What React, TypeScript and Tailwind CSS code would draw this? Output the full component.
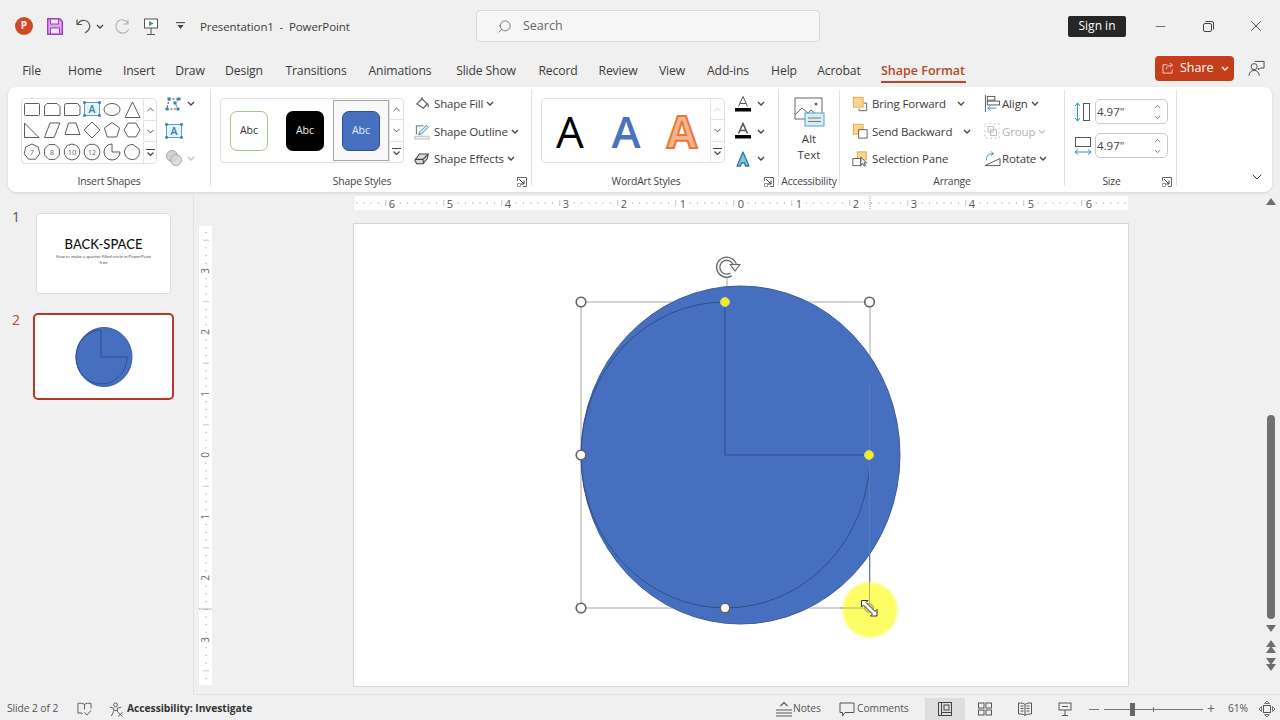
import React from "react";
import { ChevronDown, ChevronUp, Search, X, Minus } from "lucide-react";

const poly = (cx: number, cy: number, r: number, n: number, rot = -90) =>
  Array.from({ length: n }, (_, i) => {
    const a = ((rot + (360 / n) * i) * Math.PI) / 180;
    return `${(cx + r * Math.cos(a)).toFixed(1)},${(cy + r * Math.sin(a)).toFixed(1)}`;
  }).join(" ");

const Chev = ({ gray = false }: { gray?: boolean }) => (
  <svg viewBox="0 0 8 5" className="w-[8px] h-[5px] shrink-0">
    <path d="M1 1l3 3 3-3" fill="none" stroke={gray ? "#c4c4c4" : "#444"} strokeWidth="1.3" />
  </svg>
);

const Launcher = () => (
  <svg viewBox="0 0 10 10" className="w-[10px] h-[10px]">
    <path d="M.5 4V.5H9.5V9.5H6" fill="none" stroke="#666" />
    <path d="M2 2l5 5M7 3.5V7H3.5" fill="none" stroke="#3d3d3d" />
    <path d="M.5 6.5h3v3h-3z" fill="none" stroke="#999" />
  </svg>
);

const GalleryScroll = ({ disabledUp = false }: { disabledUp?: boolean }) => (
  <div className="flex flex-col h-full border-l border-[#e4e4e4] text-[#444] w-full">
    <div className="flex-1 flex items-center justify-center border-b border-[#e4e4e4]">
      <ChevronUp size={11} strokeWidth={2} color={disabledUp ? "#c8c8c8" : "#444"} />
    </div>
    <div className="flex-1 flex items-center justify-center border-b border-[#e4e4e4]">
      <ChevronDown size={11} strokeWidth={2} />
    </div>
    <div className="flex-1 flex items-center justify-center">
      <svg viewBox="0 0 9 8" className="w-[9px] h-[8px]">
        <path d="M0 .5h9" stroke="#444" />
        <path d="M1.5 3.5l3 3 3-3" fill="none" stroke="#444" strokeWidth="1.2" />
      </svg>
    </div>
  </div>
);

const Group = ({
  w,
  label,
  launcher,
  children,
  border = true,
}: {
  w: string;
  label: string;
  launcher?: boolean;
  children: React.ReactNode;
  border?: boolean;
}) => (
  <div className={`${w} h-[96px] mt-[3px] flex flex-col shrink-0 ${border ? "border-r border-[#e2e2e2]" : ""}`}>
    <div className="flex-1 flex min-h-0">{children}</div>
    <div className="h-[16px] -mb-[4px] flex items-center text-[10.4px] tracking-[-0.2px] text-[#444]">
      <div className="flex-1 text-center whitespace-nowrap">{label}</div>
      {launcher && (
        <div className="w-[18px] flex justify-center">
          <Launcher />
        </div>
      )}
    </div>
  </div>
);

const TextBoxGlyph = ({ className }: { className: string }) => (
  <svg viewBox="0 0 18 16" className={className}>
    <rect x="1.5" y="1.5" width="15" height="13" fill="#e8f3f8" stroke="#5aa0bf" />
    <text x="9" y="12" textAnchor="middle" fontSize="10.5" fontWeight="600" fill="#3c7fa8" fontFamily="Open Sans, sans-serif">
      A
    </text>
    {[[1.5, 1.5], [16.5, 1.5], [1.5, 14.5], [16.5, 14.5]].map(([x, y], i) => (
      <rect key={i} x={x - 1.3} y={y - 1.3} width="2.6" height="2.6" fill="#2f87ad" />
    ))}
  </svg>
);

const ShapesGallery = () => {
  const s = { fill: "none", stroke: "#5c5c5c", strokeWidth: 1 };
  const t = { fontSize: 7.5, fill: "#666", textAnchor: "middle" as const, fontFamily: "Open Sans, sans-serif" };
  return (
    <svg viewBox="21 98 122 66" className="w-[122px] h-[66px] shrink-0">
      <rect x="24.5" y="103.5" width="15" height="12" rx="1" {...s} />
      <path d="M47 103.5h10l3 3v9H44.5v-9.5z" {...s} strokeLinejoin="round" />
      <path d="M64.5 105.5a2 2 0 0 1 2-2h11l2.500 2.500v7.500a2 2 0 0 1-2 2h-13.500z" {...s} />
      <g transform="translate(83 101)">
        <rect x="1.500" y="1.500" width="15" height="13" fill="#e8f3f8" stroke="#5aa0bf" />
        <text x="9" y="12" textAnchor="middle" fontSize="10.500" fontWeight="600" fill="#3c7fa8" fontFamily="Open Sans, sans-serif">A</text>
        {[[1.5, 1.5], [16.5, 1.5], [1.5, 14.5], [16.5, 14.5]].map(([x, y], i) => (
          <rect key={i} x={x - 1.3} y={y - 1.3} width="2.6" height="2.6" fill="#2f87ad" />
        ))}
      </g>
      <ellipse cx="112" cy="109.500" rx="8" ry="6" {...s} />
      <path d="M132.500 102L140 117.500H125z" {...s} />
      <path d="M24.500 123L39 137.500H24.500z" {...s} />
      <path d="M44.500 137.500L50 123H60L54 137.500z" {...s} />
      <path d="M65 134.500L68.500 123H76L80 134.500z" {...s} />
      <path d="M92 122L100 130L92 138L84 130z" {...s} />
      <polygon points={poly(112, 130.5, 8, 5)} {...s} />
      <polygon points={poly(132, 130, 8, 6, 0)} {...s} />
      <polygon points={poly(32, 152, 8, 7)} {...s} />
      <text x="32" y="155" {...t}>7</text>
      <polygon points={poly(52, 152, 8, 8, 22.5)} {...s} />
      <text x="52" y="155" {...t}>8</text>
      <polygon points={poly(72, 152, 8, 10, 18)} {...s} />
      <text x="72" y="155" {...t}>10</text>
      <polygon points={poly(92, 152, 8, 12, 15)} {...s} />
      <text x="92" y="155" fontSize="7" fill="#666" textAnchor="middle" fontFamily="Open Sans, sans-serif">12</text>
      <path d="M112 144a8 8 0 1 0 8 8h-8z" {...s} />
      <path d="M124.500 152a7.500 7.500 0 0 1 7.500-7.500h1l6 4.500c1.500 7-2 10.500-7 10.500a7.500 7.500 0 0 1-7.500-7.500z" {...s} />
    </svg>
  );
};

const ActionRow = ({
  icon,
  label,
  textW,
  gray,
  tight,
}: {
  icon: React.ReactNode;
  label: string;
  textW?: string;
  gray?: boolean;
  tight?: boolean;
}) => (
  <div className={`h-[27.500px] flex items-center text-[11.5px] tracking-[-0.15px] whitespace-nowrap ${gray ? "text-[#b5b5b5]" : "text-[#3b3b3b]"}`}>
    <div className="w-[18px] h-[18px] flex items-center justify-center shrink-0">{icon}</div>
    <div className={`${tight ? "ml-[1px]" : "ml-[3px]"} ${textW ?? ""}`}>{label}</div>
    <div className="ml-[3px]">
      <Chev gray={gray} />
    </div>
  </div>
);

const FillIcon = () => (
  <svg viewBox="0 0 16 16" className="w-[15px] h-[15px]">
    <path d="M2 8.500L7.500 3l5.500 5.500-4 4.500z" fill="#fff" stroke="#555" strokeWidth="1.2" />
    <path d="M7.500 3V1M13 8c1.500 1.500 1.500 3 .500 3.500" fill="none" stroke="#555" strokeWidth="1.2" />
  </svg>
);
const OutlineIcon = () => (
  <svg viewBox="0 0 18 18" className="w-[17px] h-[17px]">
    <path d="M10 3H2.500v9" fill="none" stroke="#666" />
    <rect x="1" y="14" width="15" height="3" fill="#f0f0f0" stroke="#bbb" />
    <path d="M5 12.500l1-3 7-7 2 2-7 7z" fill="#d6edf6" stroke="#2f87ad" />
  </svg>
);
const EffectsIcon = () => (
  <svg viewBox="0 0 18 16" className="w-[16px] h-[15px]">
    <path d="M1 10l5-7h10l-1 5-5 6H3z" fill="#d9d9d9" stroke="#444" strokeWidth="1.2" />
    <path d="M1 9h9l6-6M10 9l1 5" fill="none" stroke="#444" strokeWidth="1.2" />
  </svg>
);
const AIcon = ({ kind }: { kind: "fill" | "line" | "fx" }) => (
  <svg viewBox="0 0 18 18" className="w-[18px] h-[18px]">
    {kind === "fx" ? (
      <path d="M9 2l6 14h-3.500L10.500 13h-3l-1 3H3z" fill="#7cc4e4" stroke="#2a77a6" strokeWidth="1.3" strokeLinejoin="round" />
    ) : (
      <>
        <path d="M4.500 11.500L9 1.500l4.500 10M6 8.500h6" fill="none" stroke="#555" strokeWidth={kind === "line" ? 1.6 : 1} />
        <rect x="1" y="13" width="16" height="3.500" fill="#000" />
      </>
    )}
  </svg>
);
const BringIcon = () => (
  <svg viewBox="0 0 18 18" className="w-[16px] h-[16px]">
    <path d="M13 8h3.500v8.500H8V14" fill="none" stroke="#555" />
    <rect x="1.500" y="1.500" width="11" height="11" fill="#fad58f" stroke="#e0a63a" />
  </svg>
);
const SendIcon = () => (
  <svg viewBox="0 0 18 18" className="w-[16px] h-[16px]">
    <rect x="1.500" y="1.500" width="11" height="11" fill="#fad58f" stroke="#e0a63a" />
    <rect x="7.500" y="7.500" width="9.500" height="9.500" fill="#fff" stroke="#555" />
  </svg>
);
const PaneIcon = () => (
  <svg viewBox="0 0 18 18" className="w-[16px] h-[16px]">
    <rect x="6" y="1" width="10" height="9" fill="#fad58f" stroke="#e0a63a" />
    <rect x="1" y="8.500" width="9" height="8" fill="#fff" stroke="#555" />
    <path d="M10 7v9l2-2 1.500 3 1.500-.7-1.500-3h3z" fill="#fff" stroke="#333" strokeWidth=".9" />
  </svg>
);
const AlignIcon = () => (
  <svg viewBox="0 0 18 18" className="w-[17px] h-[17px]">
    <path d="M1.500 0v18" stroke="#555" />
    <rect x="3.500" y="1.500" width="8" height="4" fill="#fff" stroke="#555" />
    <rect x="3.500" y="6.500" width="13" height="4" fill="#fff" stroke="#555" />
    <path d="M13 14H4M7 11.500L4 14l3 2.500" fill="none" stroke="#3a8fb4" />
  </svg>
);
const GroupIcon = () => (
  <svg viewBox="0 0 18 18" className="w-[16px] h-[16px]">
    <path d="M1 1h16v16H1z" fill="none" stroke="#bcbcbc" strokeDasharray="2 3" />
    <rect x="4.500" y="4" width="6" height="6" fill="none" stroke="#b4b4b4" />
    <rect x="7.500" y="7.500" width="6.500" height="6.500" fill="none" stroke="#b4b4b4" />
  </svg>
);
const RotateIcon = () => (
  <svg viewBox="0 0 18 18" className="w-[17px] h-[17px]">
    <path d="M1 16.500L17 9v7.500z" fill="none" stroke="#555" />
    <path d="M2.500 11C2.500 6 5 3.500 9.500 4M7.500 1.500l2.500 2.500-2.800 2" fill="none" stroke="#3a8fb4" />
  </svg>
);

const SizeInput = ({ value }: { value: string }) => (
  <div className="ml-[2px] w-[73px] h-[25px] border border-[#c9c9c9] rounded-[5px] flex items-center pl-[1px] text-[11.5px] text-[#444]">
    <span className="flex-1">{value}</span>
    <div className="w-[20px] flex flex-col items-center text-[#555]">
      <ChevronUp size={9} strokeWidth={2} />
      <ChevronDown size={9} strokeWidth={2} className="mt-[2px]" />
    </div>
  </div>
);

const TABS: [string, string][] = [
  ["File", "w-[45px]"],
  ["Home", "w-[62px]"],
  ["Insert", "w-[46px]"],
  ["Draw", "w-[56px]"],
  ["Design", "w-[52px]"],
  ["Transitions", "w-[92px]"],
  ["Animations", "w-[76px]"],
  ["Slide Show", "w-[96px]"],
  ["Record", "w-[48px]"],
  ["Review", "w-[72px]"],
  ["View", "w-[36px]"],
  ["Add-ins", "w-[76px]"],
  ["Help", "w-[36px]"],
  ["Acrobat", "w-[74px]"],
];

const hTicks = Array.from({ length: 107 }, (_, i) => 355 + ((i * 58) / 8 + 1.75));
const vTicks = Array.from({ length: 60 }, (_, i) => 226 + i * 7.69 + 6.5);

const HRuler = () => {
  const nums: [string, number][] = [
    ["6", 392], ["5", 450], ["4", 508], ["3", 566], ["2", 624], ["1", 683], ["0", 741],
    ["1", 799], ["2", 856], ["3", 914], ["4", 972], ["5", 1031], ["6", 1089],
  ];
  return (
    <svg viewBox="355 196 773 14" className="w-[773px] h-[14px] bg-white ml-[1px]">
      {hTicks.map((x, i) => {
        const k = ((i % 8) + 8) % 8;
        const skip = nums.some(([, n]) => Math.abs(n - x) < 4);
        if (skip) return null;
        return <line key={i} x1={x} x2={x} y1={k === 4 ? 200 : 202} y2={k === 4 ? 206 : 204} stroke="#c6c6c6" />;
      })}
      {nums.map(([t, x], i) => (
        <text key={i} x={x} y={207.500} textAnchor="middle" fontSize="11" fill="#555" fontFamily="Open Sans, sans-serif">
          {t}
        </text>
      ))}
      <line x1="870" x2="870" y1="196" y2="210" stroke="#999" strokeDasharray="1 1" />
    </svg>
  );
};

const VRuler = () => {
  const nums: [string, number][] = [
    ["3", 271], ["2", 332], ["1", 394], ["0", 455], ["1", 517], ["2", 578], ["3", 640],
  ];
  return (
    <svg viewBox="199 226 13 459" className="w-[13px] h-[459px] bg-white shrink-0">
      {vTicks.map((y, i) => {
        const skip = nums.some(([, n]) => Math.abs(n - y) < 5);
        if (skip) return null;
        const big = Math.abs(((y - 455) % 61.5 + 61.5) % 61.5 - 30.75) < 3;
        return <line key={i} x1={big ? 203 : 205} x2={big ? 209 : 207} y1={y} y2={y} stroke="#c6c6c6" />;
      })}
      {nums.map(([t, y], i) => (
        <text key={i} transform={`rotate(-90 205.500 ${y})`} x="205.500" y={y + 3.500} textAnchor="middle" fontSize="10" fill="#666" fontFamily="Open Sans, sans-serif">
          {t}
        </text>
      ))}
      <line x1="199" x2="212" y1="609" y2="609" stroke="#999" strokeDasharray="1.500 1" />
    </svg>
  );
};

const Handle = ({ x, y, yellow }: { x: number; y: number; yellow?: boolean }) => (
  <circle cx={x} cy={y} r={yellow ? 4.5 : 4.8} fill={yellow ? "#f3ee13" : "#fff"} stroke={yellow ? "#c9c9a0" : "#606060"} strokeWidth={yellow ? 1 : 1.6} />
);

const Stage = () => (
  <svg viewBox="354 224 774 462" className="absolute inset-0 w-full h-full">
    <rect x="581" y="302" width="289" height="306" fill="none" stroke="#a8a8a8" strokeWidth="1" />
    <line x1="727" y1="276" x2="727" y2="302" stroke="#a8a8a8" />
    <ellipse cx="740.500" cy="455" rx="159.500" ry="169" fill="#4670bf" stroke="#3c5d9c" strokeWidth="1" />
    <path d="M870 455A144.500 153 0 1 1 725 302V455Z" fill="#4670bf" stroke="#2e4f8c" strokeWidth="1" />
    <line x1="869.500" y1="384" x2="869.500" y2="600" stroke="#5a7cb8" strokeWidth="1" />
    <circle cx="870" cy="610" r="27.500" fill="#fdfd66" className="blur-[1px]" />
    <line x1="869.500" y1="582" x2="869.500" y2="608" stroke="#b0b07a" />
    <line x1="840" y1="608" x2="869" y2="608" stroke="#b0b07a" />
    <Handle x={581} y={302} />
    <Handle x={869.500} y={302} />
    <Handle x={581} y={455} />
    <Handle x={581} y={608} />
    <Handle x={725} y={608} />
    <Handle x={725} y={302} yellow />
    <Handle x={869} y={455} yellow />
    <circle cx="869" cy="608" r="4.500" fill="#d4d45a" stroke="#a9a96a" />
    <path d="M861.500 600.500h6.500l-2 2 9 9 2-2v6.500h-6.500l2-2-9-9-2 2z" fill="#fff" stroke="#333" strokeWidth="1" strokeLinejoin="round" />
    <g fill="none">
      <path d="M731 274.500A8.500 8.500 0 1 1 735 265.500" stroke="#666" strokeWidth="4.500" />
      <path d="M731 274.500A8.500 8.500 0 1 1 735 265.500" stroke="#f4f4f4" strokeWidth="2" />
      <circle cx="726.500" cy="267" r="3.500" stroke="#666" strokeWidth="1" opacity="0" />
      <path d="M730 264.500h10l-5 6.500z" fill="#f4f4f4" stroke="#666" strokeWidth="1.200" strokeLinejoin="round" />
    </g>
  </svg>
);

const Tri = ({ up = true, className = "" }: { up?: boolean; className?: string }) => (
  <svg viewBox="0 0 10 7" className={`w-[10px] h-[7px] ${className}`}>
    <path d={up ? "M5 0l5 7H0z" : "M0 0h10L5 7z"} fill="#6e6e6e" />
  </svg>
);

export default function App() {
  return (
    <div className="relative w-[1280px] h-[720px] overflow-hidden bg-[#f0f0f0] flex flex-col font-['Open_Sans','Noto_Sans',sans-serif] text-[#3b3b3b]">
      {/* title bar */}
      <div className="h-[52px] flex items-center shrink-0">
        <div className="w-[476px] flex items-center pl-[15px]">
          <div className="w-[18px] h-[18px] -mt-[1px] rounded-full bg-[#d24726] flex items-center justify-center text-white text-[10px] font-bold">P</div>
          <svg viewBox="0 0 16 17" className="w-[16px] h-[17px] ml-[14px]">
            <path d="M.7.7h12l2.600 2.600v13H.7z" fill="#dda8e8" stroke="#a63ac4" strokeWidth="1.400" />
            <rect x="3.500" y="1" width="8" height="5" fill="#f4e4f8" stroke="#a63ac4" />
            <rect x="3.500" y="10" width="9" height="6" fill="#f4e4f8" stroke="#a63ac4" />
          </svg>
          <svg viewBox="0 0 16 16" className="w-[16px] h-[16px] ml-[13px]">
            <path d="M1 1.500v5h5M1.500 6.500C3 3.500 6 2 9 2.500c3.500.7 5.500 4 4.500 7.500-.6 2.200-2.500 3.800-4.500 5" fill="none" stroke="#555" strokeWidth="1.200" />
          </svg>
          <div className="ml-[4px]">
            <Chev />
          </div>
          <svg viewBox="0 0 18 18" className="w-[18px] h-[18px] ml-[10px]">
            <path d="M14 2.500v4.500h-4.500M14 7C12.500 3.500 9 2 6 3 2.500 4.500 1 8.500 2.500 12c1.500 3.500 5.500 5 9 3.500 1.500-.7 2.500-2 3.200-3" fill="none" stroke="#b0b0b0" strokeWidth="1.100" />
          </svg>
          <svg viewBox="0 0 16 17" className="w-[16px] h-[17px] ml-[11px]">
            <rect x="1.500" y="1" width="13" height="9" fill="#fff" stroke="#555" />
            <path d="M6 3v5l4.500-2.500z" fill="#3aa06a" />
            <path d="M8 10v6M4 16.500h8" stroke="#555" />
          </svg>
          <svg viewBox="0 0 10 9" className="w-[9px] h-[8px] ml-[17px]">
            <path d="M0 .7h10" stroke="#444" strokeWidth="1.200" />
            <path d="M1.500 3.500h7L5 8z" fill="#444" />
          </svg>
          <span className="ml-[15px] mt-[1px] text-[11.5px] tracking-[-0.1px] text-[#3b3b3b] whitespace-pre">Presentation1  -  PowerPoint</span>
        </div>
        <div className="w-[344px] h-[32px] bg-[#f6f6f6] border border-[#d9d9d9] rounded-[4px] flex items-center pl-[20px] text-[12.5px] text-[#666]">
          <Search size={15} strokeWidth={1.3} className="-scale-x-100" />
          <span className="ml-[11px] mt-[1px]">Search</span>
        </div>
        <div className="ml-[248px] w-[58px] h-[21px] bg-[#262626] rounded-[2px] text-white text-[12px] flex items-center justify-center">Sign in</div>
        <div className="ml-[10px] w-[48px] flex justify-center"><Minus size={15} strokeWidth={1.2} color="#444" /></div>
        <div className="w-[48px] flex justify-center">
          <svg viewBox="0 0 11 11" className="w-[11px] h-[11px]">
            <rect x=".5" y="2.500" width="8" height="8" rx="1.500" fill="none" stroke="#444" />
            <path d="M2.500.5H9a1.500 1.500 0 0 1 1.500 1.500v6.500" fill="none" stroke="#444" />
          </svg>
        </div>
        <div className="w-[48px] flex justify-center"><X size={18} strokeWidth={1.1} color="#333" /></div>
      </div>

      {/* tabs */}
      <div className="h-[35px] flex items-center pl-[9px] text-[12.2px] tracking-[-0.15px] text-[#3b3b3b] shrink-0">
        {TABS.map(([t, w]) => (
          <div key={t} className={`${w} mt-[3px] flex justify-center whitespace-nowrap`}>{t}</div>
        ))}
        <div className="w-[94px] mt-[3px] relative flex justify-center whitespace-nowrap font-semibold tracking-normal text-[#b7472a] text-[12.5px]">
          Shape Format
          <div className="absolute left-[5px] right-[4px] top-[19px] h-[2px] bg-[#b7472a]" />
        </div>
        <div className="ml-[185px] w-[79px] h-[25px] -mt-[3px] rounded-[4px] bg-[#c43e1c] text-white flex items-center text-[12.5px] tracking-normal">
          <svg viewBox="0 0 14 13" className="w-[13px] h-[12px] ml-[7px]">
            <path d="M6 3H1v9h10V8" fill="none" stroke="#f6d5cc" />
            <path d="M4.500 8c.3-3 2.500-4.500 6-4.500M8.500 1l3 2.500-3 2.500" fill="none" stroke="#f6d5cc" />
          </svg>
          <span className="ml-[5px]">Share</span>
          <div className="ml-auto mr-[5px]">
            <svg viewBox="0 0 8 5" className="w-[8px] h-[5px]">
              <path d="M1 1l3 3 3-3" fill="none" stroke="#fff" strokeWidth="1.300" />
            </svg>
          </div>
        </div>
        <svg viewBox="0 0 18 18" className="w-[17px] h-[17px] ml-[14px] -mt-[3px]">
          <circle cx="6.500" cy="7" r="3.200" fill="none" stroke="#444" />
          <path d="M1 16.500c.5-3.500 2.500-5.500 5.500-5.500s5 2 5.500 5.500" fill="none" stroke="#444" />
          <path d="M7 1.500h10v7h-4l-2 2V8.500" fill="none" stroke="#444" />
        </svg>
      </div>

      {/* ribbon */}
      <div className="mx-[8px] h-[105px] bg-white rounded-[8px] shadow-[0_1px_3px_rgba(0,0,0,0.12)] flex shrink-0">
        <Group w="w-[203px]" label="Insert Shapes">
          <div className="ml-[13px] mt-[8px] w-[136px] h-[66px] border border-[#e2e2e2] rounded-[4px] flex overflow-hidden shrink-0">
            <div className="-ml-[1px] -mt-[1px]"><ShapesGallery /></div>
            <div className="flex-1 -mr-[1px]"><GalleryScroll /></div>
          </div>
          <div className="ml-[8px] flex flex-col">
            <div className="h-[27px] flex items-center">
              <svg viewBox="0 0 18 16" className="w-[18px] h-[16px]">
                <path d="M4 3h10l-4 4 3 6H2z" fill="none" stroke="#444" strokeDasharray="2 1.500" />
                {[[4, 3], [14, 3], [10, 7], [13, 13], [2, 13]].map(([x, y], i) => (
                  <rect key={i} x={x - 1.500} y={y - 1.500} width="3" height="3" fill="#2f87ad" />
                ))}
              </svg>
              <div className="ml-[4px]"><Chev /></div>
            </div>
            <div className="h-[27px] flex items-center"><TextBoxGlyph className="w-[18px] h-[16px]" /></div>
            <div className="h-[28px] flex items-center">
              <svg viewBox="0 0 18 18" className="w-[18px] h-[18px]">
                <circle cx="7" cy="7" r="5.500" fill="#d4d4d4" stroke="#aaa" />
                <circle cx="11" cy="11" r="5.500" fill="#d4d4d4" fillOpacity=".8" stroke="#aaa" />
              </svg>
              <div className="ml-[4px]"><Chev gray /></div>
            </div>
          </div>
        </Group>

        <Group w="w-[321px]" label="Shape Styles" launcher>
          <div className="ml-[9px] mt-[8px] w-[184px] h-[65px] border border-[#e2e2e2] rounded-[4px] flex shrink-0 text-[10.500px]">
            <div className="w-[56px] flex items-center justify-center">
              <div className="w-[38px] h-[40px] rounded-[7px] border-[1.500px] border-[#a3c68a] flex items-center justify-center text-[#333]">Abc</div>
            </div>
            <div className="w-[56px] flex items-center justify-center">
              <div className="w-[38px] h-[40px] rounded-[7px] bg-black flex items-center justify-center text-[#eee]">Abc</div>
            </div>
            <div className="w-[56px] h-[61px] mt-[1px] border border-[#a8a8a8] bg-[#f8f8f8] flex items-center justify-center">
              <div className="w-[38px] h-[40px] rounded-[7px] bg-[#4670bf] border border-[#2e4f8c] flex items-center justify-center text-[#e6ecf7]">Abc</div>
            </div>
            <div className="flex-1"><GalleryScroll /></div>
          </div>
          <div className="ml-[9px] flex flex-col">
            <ActionRow icon={<FillIcon />} label="Shape Fill" />
            <ActionRow icon={<OutlineIcon />} label="Shape Outline" />
            <ActionRow icon={<EffectsIcon />} label="Shape Effects" />
          </div>
        </Group>

        <Group w="w-[247px]" label="WordArt Styles" launcher>
          <div className="ml-[9px] mt-[8px] w-[184px] h-[65px] border border-[#e2e2e2] rounded-[4px] flex shrink-0 text-[44px] leading-none">
            <div className="w-[56px] flex items-center justify-center text-black">A</div>
            <div className="w-[56px] flex items-center justify-center text-[#4a72c0] font-semibold">A</div>
            <div className="w-[56px] flex items-center justify-center text-[#f5b48a] font-bold [-webkit-text-stroke:2px_#e8793a]">A</div>
            <div className="flex-1"><GalleryScroll disabledUp /></div>
          </div>
          <div className="ml-[9px] flex flex-col">
            {(["fill", "line", "fx"] as const).map((k) => (
              <div key={k} className="h-[27.500px] flex items-center">
                <AIcon kind={k} />
                <div className="ml-[5px]"><Chev /></div>
              </div>
            ))}
          </div>
        </Group>

        <Group w="w-[61px]" label="Accessibility">
          <div className="flex-1 flex flex-col items-center pt-[7px] text-[11.5px] leading-[16px] text-[#3b3b3b]">
            <svg viewBox="0 0 31 30" className="w-[31px] h-[30px]">
              <rect x="1" y="1" width="27" height="21" fill="#fff" stroke="#666" />
              <path d="M1 18l7-7 6 5 3-3 7 6" fill="none" stroke="#666" />
              <circle cx="22" cy="7" r="1.500" fill="#666" />
              <rect x="11" y="16" width="19" height="13" fill="#d6edf6" stroke="#5aa0bf" />
              <path d="M14 21h13M14 24.500h13" stroke="#777" />
            </svg>
            <div className="mt-[4px]">Alt</div>
            <div>Text</div>
          </div>
        </Group>

        <Group w="w-[225px]" label="Arrange">
          <div className="ml-[11px] w-[132px] flex flex-col shrink-0">
            <ActionRow icon={<BringIcon />} label="Bring Forward" textW="w-[82px]" />
            <ActionRow icon={<SendIcon />} label="Send Backward" textW="w-[88px]" />
            <div className="h-[27.500px] flex items-center text-[11.5px] tracking-[-0.15px] whitespace-nowrap">
              <div className="w-[18px] flex justify-center"><PaneIcon /></div>
              <div className="ml-[3px]">Selection Pane</div>
            </div>
          </div>
          <div className="flex flex-col">
            <ActionRow icon={<AlignIcon />} label="Align" tight />
            <ActionRow icon={<GroupIcon />} label="Group" gray tight />
            <ActionRow icon={<RotateIcon />} label="Rotate" tight />
          </div>
        </Group>

        <Group w="w-[112px]" label="Size" launcher>
          <div className="pt-[9px] pl-[8px] flex flex-col gap-[9px]">
            <div className="flex items-center">
              <svg viewBox="0 0 20 22" className="w-[20px] h-[22px]">
                <path d="M4.500 2v18M2 5l2.500-3L7 5M2 17l2.500 3L7 17" fill="none" stroke="#3a8fb4" />
                <rect x="10.500" y="2.500" width="6" height="17" fill="#fff" stroke="#555" />
              </svg>
              <SizeInput value={'4.97"'} />
            </div>
            <div className="flex items-center">
              <svg viewBox="0 0 20 22" className="w-[20px] h-[22px]">
                <rect x="2.500" y="2.500" width="15" height="9" fill="#fff" stroke="#555" />
                <path d="M2 17h16M5 14.500L2 17l3 2.500M15 14.500l3 2.500-3 2.500" fill="none" stroke="#3a8fb4" />
              </svg>
              <SizeInput value={'4.97"'} />
            </div>
          </div>
        </Group>

        <div className="flex-1 flex items-end justify-end pr-[7px] pb-[7px]">
          <ChevronDown size={16} strokeWidth={1.4} color="#333" />
        </div>
      </div>

      {/* main */}
      <div className="h-[503px] flex shrink-0">
        <div className="w-[194px] border-r border-[#e2e2e2] pt-[21px] shrink-0">
          <div className="flex pl-[12px]">
            <div className="w-[24px] -mt-[4px] text-[14px] leading-[16px] text-[#555]">1</div>
            <div className="w-[135px] h-[81px] bg-white border border-[#dcdcdc] rounded-[4px] flex flex-col items-center pt-[22px]">
              <div className="text-[13px] leading-[16px] text-[#111] font-medium font-['Lato','Open_Sans',sans-serif]">BACK-SPACE</div>
              <div className="w-[96px] text-center text-[4.200px] leading-[5.500px] text-[#333] mt-[2px]">How to make a quarter filled circle in PowerPoint free</div>
            </div>
          </div>
          <div className="flex pl-[12px] mt-[19px]">
            <div className="w-[21px] -mt-[1px] text-[14px] leading-[16px] text-[#b7472a]">2</div>
            <div className="w-[141px] h-[87px] bg-white border-[2.500px] border-[#b2392a] rounded-[5px] flex items-center justify-center">
              <svg viewBox="0 0 58 60" className="w-[58px] h-[60px]">
                <ellipse cx="29" cy="30" rx="28" ry="29.500" fill="#4670bf" stroke="#3c5d9c" />
                <path d="M52 30A25.500 27 0 1 1 26 3V30Z" fill="#4670bf" stroke="#2e4f8c" />
              </svg>
            </div>
          </div>
        </div>

        <div className="flex-1 flex min-w-0 border-b border-[#e2e2e2]">
          <div className="ml-[5px] mt-[34px] shrink-0"><VRuler /></div>
          <div className="ml-[142px] w-[774px] shrink-0 flex flex-col">
            <div className="mt-[4px]"><HRuler /></div>
            <div className="relative mt-[14px] h-[462px] bg-white shadow-[0_0_0_1px_#d6d6d6]">
              <Stage />
            </div>
          </div>
          <div className="ml-auto mr-[4px] w-[10px] flex flex-col items-center">
            <Tri className="mt-[6px]" />
            <div className="mt-[210px] w-[8px] h-[204px] rounded-full bg-[#707070]" />
            <Tri up={false} className="mt-[6px]" />
            <div className="mt-[8px] flex flex-col -space-y-[1px]"><Tri /><Tri /></div>
            <div className="mt-[5px] flex flex-col -space-y-[1px]"><Tri up={false} /><Tri up={false} /></div>
          </div>
        </div>
      </div>

      {/* status bar */}
      <div className="h-[25px] pt-[3px] flex items-center pl-[7px] text-[10.3px] tracking-[-0.1px] text-[#555] shrink-0">
        <div className="w-[68px] whitespace-nowrap">Slide 2 of 2</div>
        <div className="w-[18px] flex justify-center">
          <svg viewBox="0 0 16 15" className="w-[15px] h-[14px]">
            <path d="M8 2.500C6.500 1.500 3.500 1 1 1.500V12c2.500-.5 4-.2 5 .5M8 2.500C9.500 1.500 12.500 1 15 1.500V7M8 2.500V8M8 11l2.500 3L15 9" fill="none" stroke="#555" />
          </svg>
        </div>
        <div className="ml-[15px] w-[16px] flex justify-center">
          <svg viewBox="0 0 16 16" className="w-[15px] h-[15px]">
            <circle cx="7" cy="3" r="2" fill="none" stroke="#555" />
            <path d="M1 5.500l4 1V10l-2.500 5M13 5.500l-4 1V10l1 1M6 9h3" fill="none" stroke="#555" />
            <path d="M9.500 11l5 4.500M14.500 11l-5 4.500" stroke="#555" />
          </svg>
        </div>
        <div className="ml-[3px] font-bold text-[#333] whitespace-nowrap text-[10.3px] tracking-[-0.05px]">Accessibility: Investigate</div>

        <div className="ml-auto flex items-center mr-[5px] w-[500px] h-full">
          <svg viewBox="0 0 18 16" className="w-[18px] h-[16px]">
            <path d="M1 9h16M1 12h16M1 15h16" stroke="#555" />
            <path d="M5.500 5L9 1.500 12.500 5" fill="none" stroke="#555" strokeWidth="1.200" />
          </svg>
          <div className="w-[46px] whitespace-nowrap">Notes</div>
          <svg viewBox="0 0 16 15" className="w-[16px] h-[15px]">
            <path d="M1 1h14v9.500H6L3.500 14v-3.500H1z" fill="none" stroke="#555" />
          </svg>
          <div className="ml-[2px] w-[68px] whitespace-nowrap">Comments</div>
          <div className="w-[40px] h-full bg-[#dedede] flex items-center justify-center">
            <svg viewBox="0 0 14 14" className="w-[14px] h-[14px]">
              <rect x=".5" y=".5" width="13" height="13" fill="none" stroke="#444" />
              <path d="M3.500.5v13M3.500 10.500h10" stroke="#444" />
              <rect x="6" y="3" width="5" height="5" fill="none" stroke="#444" />
            </svg>
          </div>
          <div className="w-[40px] flex justify-center">
            <svg viewBox="0 0 14 14" className="w-[14px] h-[14px]">
              <rect x=".5" y="1" width="5.500" height="5" fill="none" stroke="#555" />
              <rect x="8" y="1" width="5.500" height="5" fill="none" stroke="#555" />
              <rect x=".5" y="8" width="5.500" height="5" fill="none" stroke="#555" />
              <rect x="8" y="8" width="5.500" height="5" fill="none" stroke="#555" />
            </svg>
          </div>
          <div className="w-[40px] flex justify-center">
            <svg viewBox="0 0 14 14" className="w-[14px] h-[14px]">
              <path d="M7 2.500C5.500 1 3 1 .5 1v11C3 12 5.500 12 7 13.500 8.500 12 11 12 13.500 12V1C11 1 8.500 1 7 2.500zM7 2.500v11M2.500 4h3M2.500 6.500h3M2.500 9h3M8.500 4h3M8.500 6.500h3M8.500 9h3" fill="none" stroke="#555" />
            </svg>
          </div>
          <div className="w-[40px] flex justify-center">
            <svg viewBox="0 0 14 14" className="w-[14px] h-[14px]">
              <rect x="1" y="1" width="12" height="7" fill="none" stroke="#555" />
              <path d="M7 8v5M4 13.500h6M4 4.500h6" stroke="#555" />
            </svg>
          </div>
          <div className="ml-[4px] w-[10px] h-[1px] bg-[#777]" />
          <div className="ml-[5px] w-[99px] h-[1px] bg-[#777] relative">
            <div className="absolute left-[26px] -top-[6px] w-[5px] h-[13px] bg-[#666]" />
            <div className="absolute left-[49px] -top-[2px] w-[1px] h-[5px] bg-[#777]" />
          </div>
          <div className="ml-[3px] w-[10px] h-[10px] relative flex items-center justify-center text-[14px] leading-none text-[#666]">+</div>
          <div className="ml-[7px] w-[30px] text-center whitespace-nowrap">61%</div>
          <svg viewBox="0 0 16 16" className="w-[16px] h-[16px] ml-[6px]">
            <rect x="4.500" y="4.500" width="7" height="7" fill="none" stroke="#555" />
            <path d="M5.500 2.500L8 0l2.500 2.500zM5.500 13.500L8 16l2.500-2.500zM2.500 5.500L0 8l2.500 2.500zM13.500 5.500L16 8l-2.500 2.500z" fill="none" stroke="#555" strokeWidth=".8" />
          </svg>
        </div>
      </div>
    </div>
  );
}
